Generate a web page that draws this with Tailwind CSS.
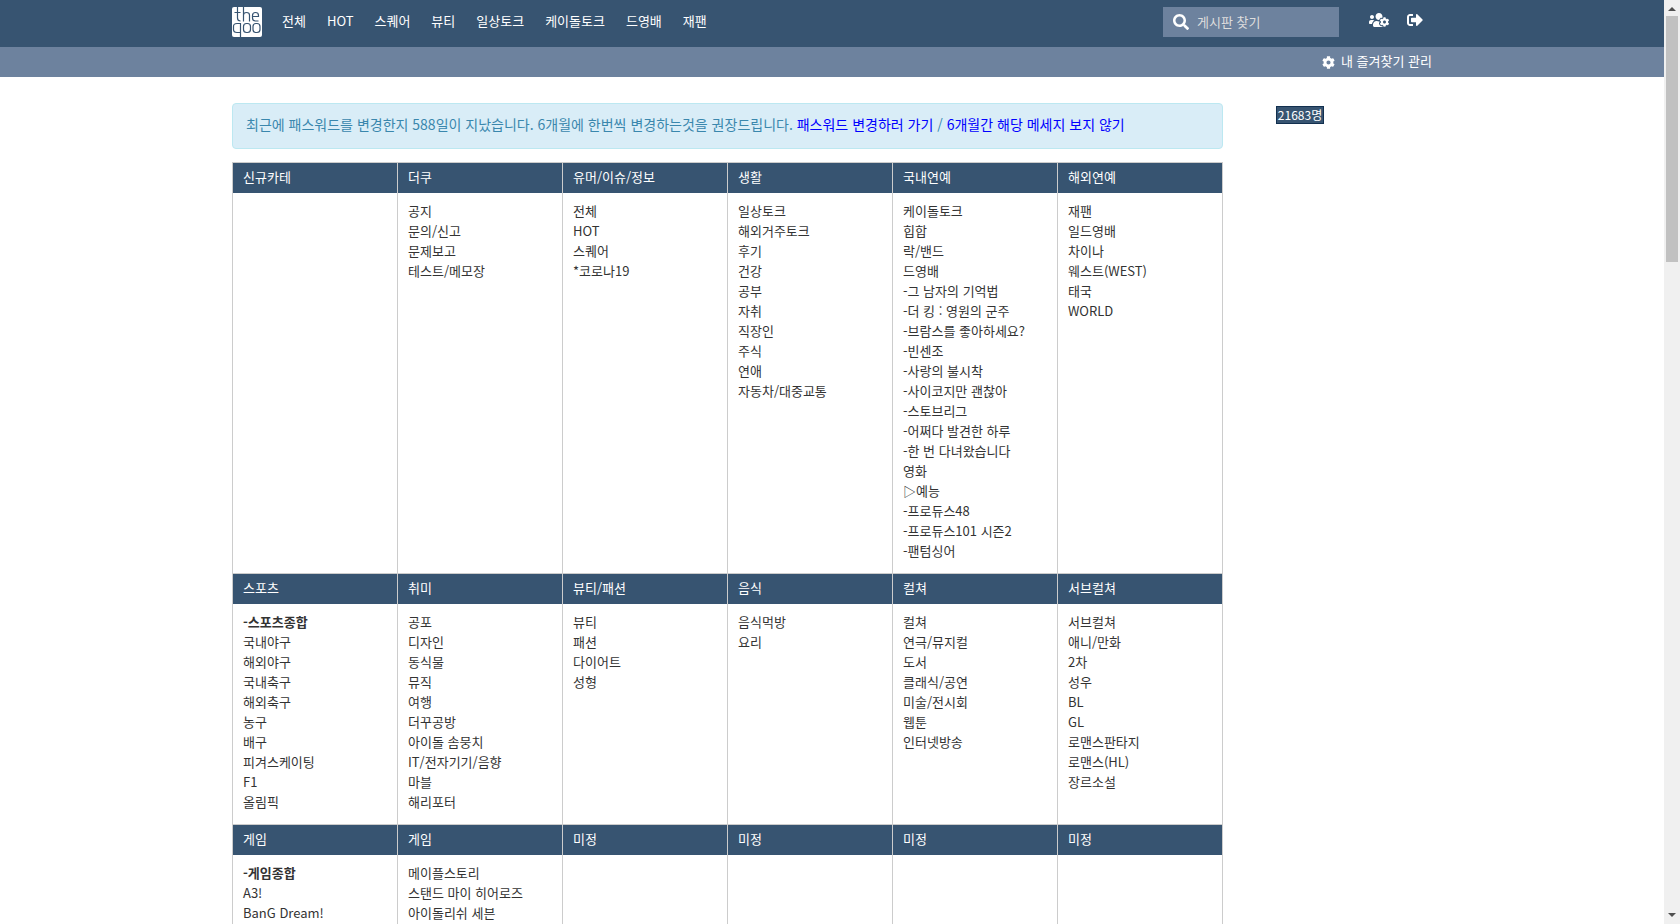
<!DOCTYPE html>
<html lang="ko">
<head>
    <meta charset="UTF-8">
    <meta name="viewport" content="width=device-width, initial-scale=1.0">
    <title>더쿠</title>
    <script src="https://cdn.jsdelivr.net/npm/@tailwindcss/browser@4"></script>
    <style>
        body { font-family: 'Noto Sans CJK KR', sans-serif; }
    </style>
</head>
<body class="flex h-screen overflow-hidden bg-white text-[13px] leading-5 text-[#333]">
    <div class="min-w-0 flex-1">
        <header class="bg-[#375471] text-white">
            <div class="mx-auto flex h-[47px] max-w-[1200px] items-start pt-[7px]">
                <a href="#" aria-label="theqoo" class="mr-5 block">
                    <svg class="h-[30px] w-[30px]" viewBox="0 0 30 30" fill="none" stroke="#375471" stroke-width="1.2">
                        <rect width="30" height="30" rx="2" fill="#fff" stroke="none"/>
                        <path d="M5.500 0V11Q5.500 14 8.500 14M2.500 5.500H8.500M11.500 0V14.500M11.500 8Q11.500 5.500 14.500 5.500Q17.500 5.500 17.500 8V14.500M20.500 9.500H26.500V8.500Q26.500 5.500 23.500 5.500Q20.500 5.500 20.500 8.500V11Q20.500 14 23.500 14H26.500"/>
                        <path d="M8.500 30V16.500H5Q1.500 16.500 1.500 19.500V22.500Q1.500 25.500 5 25.500H8.500"/>
                        <rect x="11.500" y="16.500" width="7" height="9" rx="3"/>
                        <rect x="21" y="16.500" width="7" height="9" rx="3"/>
                    </svg>
                </a>
                <nav class="flex gap-[21px] pt-1">
                    <a href="#">전체</a>
                    <a href="#">HOT</a>
                    <a href="#">스퀘어</a>
                    <a href="#">뷰티</a>
                    <a href="#">일상토크</a>
                    <a href="#">케이돌토크</a>
                    <a href="#">드영배</a>
                    <a href="#">재팬</a>
                </nav>
                <form class="ml-auto flex h-[30px] w-44 items-center gap-2 bg-[#6d829e] px-2.5">
                    <svg class="h-4 w-4 shrink-0" viewBox="0 0 512 512" fill="currentColor"><path d="M505 442.700L405.300 343c-4.500-4.500-10.600-7-17-7H372c27.600-35.300 44-79.700 44-128C416 93.100 322.900 0 208 0S0 93.100 0 208s93.100 208 208 208c48.300 0 92.700-16.400 128-44v16.300c0 6.400 2.500 12.500 7 17l99.700 99.700c9.400 9.400 24.600 9.400 33.900 0l28.300-28.300c9.400-9.400 9.400-24.600.1-34zM208 336c-70.700 0-128-57.200-128-128 0-70.700 57.200-128 128-128 70.700 0 128 57.200 128 128 0 70.700-57.200 128-128 128z"/></svg>
                    <input type="text" aria-label="게시판 찾기" placeholder="게시판 찾기" class="w-full min-w-0 bg-transparent outline-none placeholder:text-[#ddd]">
                </form>
                <div class="ml-7 mr-[5px] flex gap-3 pt-1">
                    <a href="#" aria-label="회원 설정" class="flex h-5 w-6 items-center justify-center pb-0.5">
                        <svg class="h-4 w-5" viewBox="0 0 640 512" fill="currentColor"><path d="M610.500 341.300c2.600-14.100 2.600-28.500 0-42.600l25.800-14.900c3-1.700 4.300-5.200 3.300-8.500-6.700-21.600-18.200-41.200-33.200-57.400-2.300-2.500-6-3.100-9-1.400l-25.800 14.900c-10.900-9.300-23.400-16.500-36.900-21.300v-29.800c0-3.400-2.400-6.400-5.700-7.100-22.300-5-45-4.800-66.200 0-3.300.7-5.700 3.700-5.700 7.100v29.800c-13.500 4.800-26 12-36.900 21.300l-25.800-14.900c-2.900-1.700-6.700-1.100-9 1.400-15 16.200-26.500 35.800-33.200 57.400-1 3.300.4 6.800 3.300 8.500l25.800 14.900c-2.600 14.100-2.600 28.500 0 42.600l-25.800 14.900c-3 1.700-4.300 5.200-3.300 8.500 6.700 21.600 18.200 41.100 33.200 57.400 2.300 2.500 6 3.100 9 1.400l25.800-14.900c10.900 9.300 23.400 16.500 36.900 21.300v29.800c0 3.400 2.400 6.400 5.700 7.100 22.300 5 45 4.800 66.200 0 3.300-.7 5.700-3.700 5.700-7.100v-29.800c13.500-4.800 26-12 36.900-21.300l25.800 14.900c2.900 1.700 6.700 1.100 9-1.400 15-16.200 26.500-35.800 33.200-57.400 1-3.300-.4-6.800-3.300-8.500l-25.800-14.900zM496 368.500c-26.800 0-48.500-21.800-48.500-48.500s21.800-48.500 48.500-48.500 48.500 21.800 48.500 48.500-21.700 48.500-48.500 48.500zM96 224c35.300 0 64-28.700 64-64s-28.700-64-64-64-64 28.700-64 64 28.700 64 64 64zm224 32c1.900 0 3.700-.5 5.600-.6 8.300-21.700 20.500-42.100 36.300-59.200 7.400-8 17.900-12.600 28.900-12.600 6.900 0 13.700 1.800 19.600 5.300l7.900 4.600c.8-.5 1.600-.9 2.400-1.400 7-14.600 11.200-30.800 11.200-48 0-61.900-50.100-112-112-112S208 82.100 208 144c0 61.900 50.100 112 112 112zm105.200 194.500c-2.300-1.200-4.600-2.600-6.800-3.900-8.200 4.800-15.300 9.800-27.500 9.800-10.900 0-21.400-4.600-28.900-12.600-18.300-19.800-32.300-43.900-40.200-69.600-10.700-34.500 24.900-49.700 25.800-50.300-.1-2.600-.1-5.200 0-7.800l-7.900-4.600c-3.800-2.200-7-5-9.800-8.100-3.300.2-6.500.6-9.800.6-24.600 0-47.600-6-68.500-16h-8.300C179.600 288 128 339.600 128 403.200V432c0 26.500 21.500 48 48 48h255.400c-3.700-6-6.200-12.800-6.200-20.300v-9.200zM173.100 274.600C161.500 263.100 145.600 256 128 256H64c-35.300 0-64 28.700-64 64v32c0 17.700 14.300 32 32 32h65.900c6.300-47.400 34.900-87.300 75.200-109.400z"/></svg>
                    </a>
                    <a href="#" aria-label="로그아웃" class="flex h-5 w-6 items-center justify-center pb-0.5">
                        <svg class="h-4 w-4" viewBox="0 0 512 512" fill="currentColor"><path d="M497 273L329 441c-15 15-41 4.500-41-17v-96H152c-13.300 0-24-10.700-24-24v-96c0-13.300 10.700-24 24-24h136V88c0-21.400 25.900-32 41-17l168 168c9.300 9.400 9.300 24.600 0 34zM192 436v-40c0-6.600-5.400-12-12-12H96c-17.700 0-32-14.300-32-32V160c0-17.700 14.300-32 32-32h84c6.600 0 12-5.400 12-12V76c0-6.600-5.400-12-12-12H96c-53 0-96 43-96 96v192c0 53 43 96 96 96h84c6.600 0 12-5.400 12-12z"/></svg>
                    </a>
                </div>
            </div>
            <div class="bg-[#6d829e]">
                <div class="mx-auto flex h-[30px] max-w-[1200px] items-center justify-end">
                    <a href="#" class="flex items-center gap-1.5">
                        <svg class="h-[13px] w-[13px]" viewBox="0 0 512 512" fill="currentColor"><path d="M487.400 315.700l-42.600-24.600c4.300-23.200 4.300-47 0-70.200l42.600-24.600c4.900-2.800 7.100-8.600 5.500-14-11.100-35.600-30-67.800-54.700-94.600-3.800-4.100-10-5.100-14.800-2.300L380.800 110c-17.900-15.400-38.500-27.300-60.800-35.100V25.800c0-5.600-3.900-10.500-9.400-11.700-36.700-8.200-74.300-7.800-109.200 0-5.500 1.200-9.400 6.100-9.400 11.700V75c-22.200 7.900-42.800 19.800-60.800 35.100L88.700 85.500c-4.900-2.800-11-1.900-14.800 2.300-24.700 26.700-43.600 58.900-54.700 94.600-1.700 5.400.6 11.200 5.500 14L67.300 221c-4.300 23.200-4.300 47 0 70.200l-42.600 24.600c-4.900 2.800-7.100 8.600-5.500 14 11.100 35.600 30 67.800 54.700 94.600 3.800 4.100 10 5.100 14.800 2.300l42.600-24.600c17.900 15.400 38.500 27.300 60.800 35.100v49.200c0 5.600 3.900 10.500 9.400 11.700 36.700 8.200 74.300 7.800 109.200 0 5.500-1.200 9.400-6.100 9.400-11.700v-49.200c22.200-7.900 42.800-19.800 60.800-35.100l42.600 24.600c4.900 2.800 11 1.900 14.800-2.300 24.700-26.700 43.600-58.900 54.700-94.600 1.500-5.500-.7-11.300-5.600-14.100zM256 336c-44.100 0-80-35.900-80-80s35.900-80 80-80 80 35.900 80 80-35.900 80-80 80z"/></svg>
                        <span class="pb-0.5">내 즐겨찾기 관리</span>
                    </a>
                </div>
            </div>
        </header>

        <div class="mx-auto flex max-w-[1200px] items-start pt-[26px]">
            <main class="min-w-0 flex-1">
                <p class="mb-[13px] rounded border border-[#bce8f1] bg-[#d9edf7] px-[13px] pt-2.5 pb-3.5 text-sm leading-5 text-[#3a87ad]">최근에 패스워드를 변경한지 588일이 지났습니다. 6개월에 한번씩 변경하는것을 권장드립니다. <a href="#" class="text-[#00f]">패스워드 변경하러 가기</a> / <a href="#" class="text-[#00f]">6개월간 해당 메세지 보지 않기</a></p>
                <table class="w-full table-fixed border-separate border-spacing-0 border-l border-[#ccc] text-left">
                    <tbody id="boards"></tbody>
                </table>
            </main>
            <aside class="ml-[53px] w-[156px] pt-[3px]">
                <span class="block h-[18px] w-12 border border-[#12304f] bg-[#375471] text-center text-xs leading-4 text-white">21683명</span>
            </aside>
        </div>
    </div>

    <!-- 스크롤바 -->
    <div class="flex w-4 shrink-0 flex-col items-center bg-[#f0f0f0] py-[7px]" aria-hidden="true">
        <svg class="h-1 w-2" viewBox="0 0 8 4" fill="#505050"><path d="M0 4L4 0L8 4z"/></svg>
        <div class="mt-[5px] h-[246px] w-3 bg-[#c1c1c1]"></div>
        <svg class="mt-auto h-1 w-2" viewBox="0 0 8 4" fill="#505050"><path d="M0 0L4 4L8 0z"/></svg>
    </div>

    <script>
        const rows = [
            [
                ['신규카테', []],
                ['더쿠', ['공지', '문의/신고', '문제보고', '테스트/메모장']],
                ['유머/이슈/정보', ['전체', 'HOT', '스퀘어', '*코로나19']],
                ['생활', ['일상토크', '해외거주토크', '후기', '건강', '공부', '자취', '직장인', '주식', '연애', '자동차/대중교통']],
                ['국내연예', ['케이돌토크', '힙합', '락/밴드', '드영배', '-그 남자의 기억법', '-더 킹 : 영원의 군주', '-브람스를 좋아하세요?', '-빈센조', '-사랑의 불시착', '-사이코지만 괜찮아', '-스토브리그', '-어쩌다 발견한 하루', '-한 번 다녀왔습니다', '영화', '▷예능', '-프로듀스48', '-프로듀스101 시즌2', '-팬텀싱어']],
                ['해외연예', ['재팬', '일드영배', '차이나', '웨스트(WEST)', '태국', 'WORLD']]
            ],
            [
                ['스포츠', ['-스포츠종합', '국내야구', '해외야구', '국내축구', '해외축구', '농구', '배구', '피겨스케이팅', 'F1', '올림픽']],
                ['취미', ['공포', '디자인', '동식물', '뮤직', '여행', '더꾸공방', '아이돌 솜뭉치', 'IT/전자기기/음향', '마블', '해리포터']],
                ['뷰티/패션', ['뷰티', '패션', '다이어트', '성형']],
                ['음식', ['음식먹방', '요리']],
                ['컬쳐', ['컬쳐', '연극/뮤지컬', '도서', '클래식/공연', '미술/전시회', '웹툰', '인터넷방송']],
                ['서브컬쳐', ['서브컬쳐', '애니/만화', '2차', '성우', 'BL', 'GL', '로맨스판타지', '로맨스(HL)', '장르소설']]
            ],
            [
                ['게임', ['-게임종합', 'A3!', 'BanG Dream!']],
                ['게임', ['메이플스토리', '스탠드 마이 히어로즈', '아이돌리쉬 세븐']],
                ['미정', []],
                ['미정', []],
                ['미정', []],
                ['미정', []]
            ]
        ];
        const boldBoards = ['-스포츠종합', '-게임종합'];

        function boardLink(name) {
            const bold = boldBoards.includes(name) ? 'font-bold' : '';
            return `<li><a href="#" class="${bold}">${name}</a></li>`;
        }

        document.getElementById('boards').innerHTML = rows.map(row => `
            <tr>${row.map(([title]) => `<th class="h-[31px] border-t border-r border-[#ccc] bg-[#375471] px-2.5 pt-0 pb-0.5 font-normal text-white">${title}</th>`).join('')}</tr>
            <tr>${row.map(([, boards]) => `<td class="border-r border-[#ccc] px-2.5 pt-2 pb-3 align-top"><ul>${boards.map(boardLink).join('')}</ul></td>`).join('')}</tr>
        `).join('');
    </script>
</body>
</html>
